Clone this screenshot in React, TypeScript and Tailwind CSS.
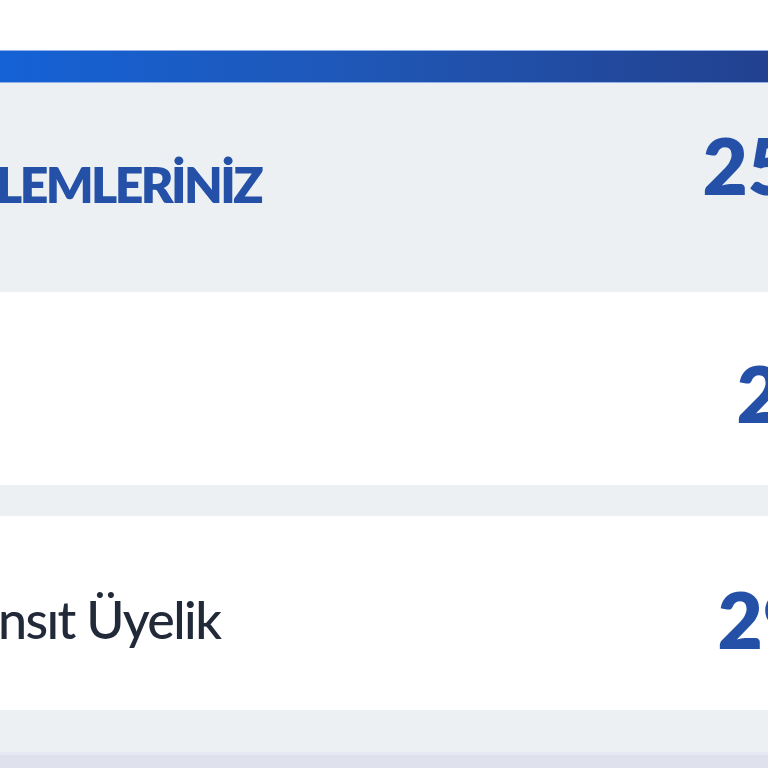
const FONT = "font-['Lato','Liberation_Sans',sans-serif]";

export default function App() {
  return (
    <div className={`flex h-[768px] w-[768px] flex-col overflow-hidden bg-white ${FONT}`}>
      <div className="h-[50px] shrink-0 bg-white" />
      <div className="h-[33px] shrink-0 border-y border-[#8fb0e8] bg-gradient-to-r from-[#1462d6] via-[#1f56b4] to-[#22418f]" />

      <div className="flex h-[209px] shrink-0 items-center justify-between bg-[#edf0f3]">
        <span className="-ml-[4px] mt-[-8px] whitespace-nowrap text-[50px] font-extrabold leading-none tracking-[-2.6px] text-[#2451a7]">
          LEMLERİNİZ
        </span>
        <span className="-mr-[25px] mt-[-46px] whitespace-nowrap text-[78px] font-extrabold leading-none text-[#2451a7]">
          25
        </span>
      </div>

      <div className="flex h-[193px] shrink-0 items-center justify-end bg-white">
        <span className="-mr-[59px] mt-[8px] whitespace-nowrap text-[78px] font-extrabold leading-none text-[#2451a7]">
          20
        </span>
      </div>

      <div className="h-[31px] shrink-0 bg-[#edf0f3]" />

      <div className="flex h-[194px] shrink-0 items-center justify-between bg-white">
        <span className="-ml-[2px] mt-[12px] whitespace-nowrap text-[52px] font-medium leading-none tracking-[-1.6px] text-[#222a3a]">
          nsıt Üyelik
        </span>
        <span className="-mr-[40px] mt-[12px] whitespace-nowrap text-[78px] font-extrabold leading-none text-[#2451a7]">
          29
        </span>
      </div>

      <div className="h-[42px] shrink-0 bg-[#edf0f3]" />
      <div className="flex-1 border-t-[3px] border-[#e6e9f4] bg-[#dfe2ec]" />
    </div>
  );
}
